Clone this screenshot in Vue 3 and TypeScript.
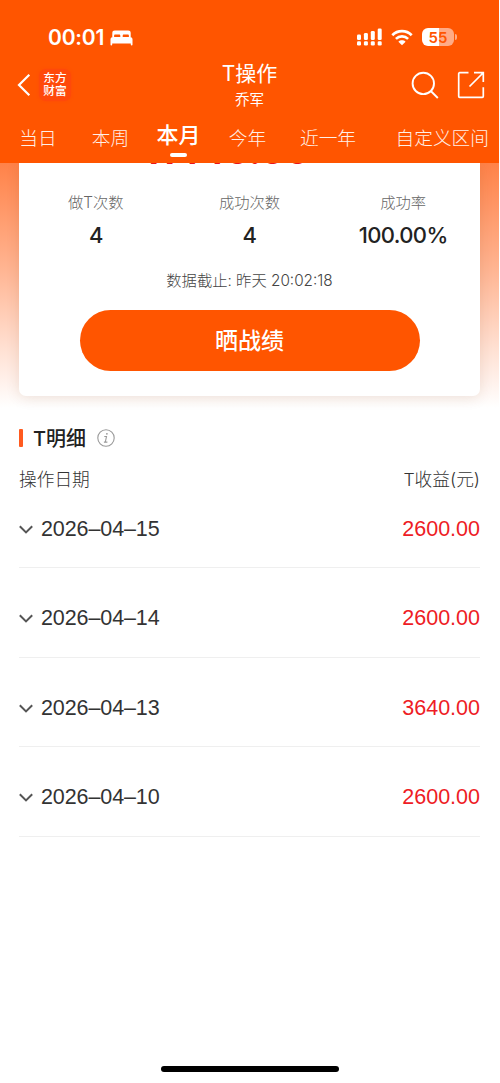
<script setup lang="ts">
interface Stat {
  label: string
  value: string
}
interface Row {
  date: string
  profit: string
}

const tabs: string[] = ['当日', '本周', '本月', '今年', '近一年', '自定义区间']
const activeTab = 2
const stats: Stat[] = [
  { label: '做T次数', value: '4' },
  { label: '成功次数', value: '4' },
  { label: '成功率', value: '100.00%' },
]
const rows: Row[] = [
  { date: '2026–04–15', profit: '2600.00' },
  { date: '2026–04–14', profit: '2600.00' },
  { date: '2026–04–13', profit: '3640.00' },
  { date: '2026–04–10', profit: '2600.00' },
]
const signalBars: number[] = [5.5, 7, 9, 11.5]
</script>

<template>
  <div class="page">
    <header class="header">
      <div class="status">
        <div class="clock">
          <span class="time">00:01</span>
          <svg class="bed" viewBox="0 0 23 16" width="23" height="16" fill="#fff">
            <path d="M2.300 7V3C2.300 1.300 3.200.5 4.800.5H18.200C19.800.5 20.700 1.300 20.700 3V7H18.900V5.700C18.900 4.900 18.500 4.500 17.700 4.500H13.900C13.100 4.500 12.700 4.900 12.700 5.700V7H10.300V5.700C10.300 4.900 9.900 4.500 9.100 4.500H5.300C4.500 4.500 4.100 4.900 4.100 5.700V7Z" />
            <path d="M3 6.900H20C21.600 6.900 22.500 7.800 22.500 9.400V14.800C22.500 15.300 22.200 15.600 21.700 15.600S20.800 15.300 20.800 14.800V13.500H2.200V14.800C2.200 15.300 1.800 15.600 1.300 15.600S.5 15.300.5 14.800V9.400C.5 7.800 1.400 6.900 3 6.900Z" />
          </svg>
        </div>
        <div class="indicators">
          <svg class="signal" viewBox="0 0 25 18" width="25" height="18" fill="#fff">
            <g v-for="(h, i) in signalBars" :key="i">
              <rect :x="i * 6.9" :y="12 - h" width="4" :height="h" rx="1.3" />
              <rect :x="i * 6.9" y="13.3" width="4" height="4.2" rx="1.3" />
            </g>
          </svg>
          <svg class="wifi" viewBox="0 0 22 17" width="22" height="17">
            <path d="M1.300 6.200C6.700.8 15.300.8 20.700 6.200" fill="none" stroke="#fff" stroke-width="2.7" />
            <path d="M4.900 9.900c3.500-3.400 8.700-3.400 12.200 0" fill="none" stroke="#fff" stroke-width="2.6" />
            <path d="M11 16.300 7.400 12.700c2-1.800 5.200-1.800 7.200 0z" fill="#fff" />
          </svg>
          <div class="battery">55</div>
          <i class="cap"></i>
        </div>
      </div>

      <div class="nav">
        <div class="nav-left">
          <svg viewBox="0 0 14 24" width="14" height="24" fill="none" stroke="#fff" stroke-width="2.2">
            <path d="M12.300 1.700 2 12l10.300 10.300" />
          </svg>
          <div class="logo"><span>东方</span><span>财富</span></div>
        </div>
        <div class="titles">
          <h1>T操作</h1>
          <p>乔军</p>
        </div>
        <div class="nav-right">
          <svg viewBox="0 0 28 28" width="28" height="28" fill="none" stroke="#fff" stroke-width="1.9">
            <circle cx="12.3" cy="12.4" r="10.7" />
            <path d="m19.800 20 7 7" />
          </svg>
          <svg viewBox="0 0 28 28" width="28" height="28" fill="none" stroke="#fff" stroke-width="1.7">
            <path d="M11.500 1.700H2.700a1 1 0 0 0-1 1v22.600a1 1 0 0 0 1 1h22.600a1 1 0 0 0 1-1v-9" />
            <path d="M17 1.700h9.300V11M26 2 12.500 15.500" />
          </svg>
        </div>
      </div>

      <nav class="tabs">
        <span v-for="(t, i) in tabs" :key="t" class="tab" :class="{ active: i === activeTab }">{{ t }}</span>
      </nav>
    </header>

    <section class="hero">
      <div class="card">
        <div class="total"><span>11440.00</span></div>
        <div class="stats">
          <div v-for="s in stats" :key="s.label" class="stat">
            <span class="label">{{ s.label }}</span>
            <span class="value">{{ s.value }}</span>
          </div>
        </div>
        <p class="deadline">数据截止: 昨天 20:02:18</p>
        <button class="share" type="button">晒战绩</button>
      </div>
    </section>

    <section class="detail">
      <div class="heading">
        <i class="mark"></i>
        <h2>T明细</h2>
        <svg viewBox="0 0 18 18" width="18" height="18" fill="none" stroke="#999">
          <circle cx="9" cy="9" r="8.2" stroke-width="1.1" />
          <path d="M7.300 7.500h2.200L8.300 13M6.900 13.100h3.500" stroke-width="1.1" />
          <circle cx="9.9" cy="4.8" r=".9" fill="#999" stroke="none" />
        </svg>
      </div>
      <div class="columns"><span>操作日期</span><span>T收益(元)</span></div>
      <div v-for="r in rows" :key="r.date" class="row">
        <svg viewBox="0 0 14 9" width="14" height="9" fill="none" stroke="#555" stroke-width="2">
          <path d="m.8 1.200 6.200 6.200 6.200-6.200" />
        </svg>
        <span class="date">{{ r.date }}</span>
        <span class="profit">{{ r.profit }}</span>
      </div>
    </section>

    <footer class="home"><i></i></footer>
  </div>
</template>

<style>
body {
  margin: 0;
  background: #fff;
}
</style>

<style scoped>
.page {
  display: flex;
  flex-direction: column;
  width: 499px;
  height: 1083px;
  overflow: hidden;
  background: #fff;
  color: #222;
  font-family: Inter, "Noto Sans CJK SC", sans-serif;
}
h1, h2, p {
  margin: 0;
  font-weight: 400;
}
svg {
  display: block;
  flex: none;
}
.header {
  flex: none;
  height: 163px;
  background: #ff5500;
  color: #fff;
}
.status {
  display: flex;
  justify-content: space-between;
  height: 62px;
  padding: 12px 42px 0 48px;
  box-sizing: border-box;
}
.clock, .indicators {
  display: flex;
  align-items: center;
  height: 50px;
}
.clock {
  gap: 6px;
}
.bed {
  margin-top: 1px;
}
.time {
  padding-top: 2px;
  font-size: 21px;
  font-weight: 600;
  line-height: 26px;
  letter-spacing: -0.2px;
}
.signal, .wifi {
  margin-right: 9px;
}
.battery {
  width: 32px;
  height: 18px;
  border-radius: 6px;
  background: linear-gradient(90deg, #fff 54%, #ffab86 54%);
  color: #ff5500;
  font-size: 15px;
  font-weight: 600;
  line-height: 19px;
  text-align: center;
}
.cap {
  width: 2px;
  height: 6px;
  margin-left: 1px;
  border-radius: 0 2px 2px 0;
  background: #ffab86;
}
.nav {
  display: grid;
  grid-template-columns: 1fr 120px 1fr;
  height: 51px;
}
.nav-left {
  display: flex;
  align-items: center;
  gap: 8px;
  height: 46px;
  padding-left: 17px;
}
.logo {
  display: flex;
  flex-direction: column;
  align-items: center;
  justify-content: center;
  width: 32px;
  height: 32px;
  border-radius: 7px;
  background: #ff490a;
  box-shadow: 0 0 3px #ff490a;
  font-size: 11.7px;
  font-weight: 500;
  line-height: 13px;
}
.titles {
  text-align: center;
}
.titles h1 {
  height: 26px;
  font-size: 21px;
  line-height: 24px;
}
.titles p {
  font-size: 14.5px;
  line-height: 23px;
}
.nav-right {
  display: flex;
  align-items: center;
  justify-content: flex-end;
  gap: 18px;
  height: 46px;
  padding-right: 14px;
}
.tabs {
  display: grid;
  grid-template-columns: 76px 69px 67px 71px 90px 116px;
  height: 50px;
}
.tab {
  font-size: 18.7px;
  font-weight: 300;
  line-height: 51px;
  text-align: center;
  white-space: nowrap;
  color: #fff0e8;
}
.tab:last-child {
  text-align: right;
}
.tab.active {
  display: flex;
  flex-direction: column;
  align-items: center;
  height: 44px;
  font-size: 22px;
  font-weight: 500;
  line-height: 44px;
  color: #fff;
}
.tab.active::after {
  flex: none;
  width: 17px;
  height: 4px;
  margin-top: -4px;
  border-radius: 2px;
  background: #fff;
  content: "";
}
.hero {
  flex: none;
  height: 253px;
  padding: 0 19px;
  overflow: hidden;
  background: linear-gradient(180deg, #ff8248 0, #ffb491 105px, #ffe0d2 185px, #fff 245px);
}
.card {
  display: flex;
  flex-direction: column;
  align-items: center;
  height: 233px;
  border-radius: 0 0 7px 7px;
  background: #fff;
  box-shadow: 0 2px 14px rgba(110, 50, 20, 0.12);
}
.total {
  display: flex;
  align-items: flex-end;
  justify-content: center;
  align-self: stretch;
  height: 3px;
  padding-right: 46px;
  overflow: hidden;
  color: #e8141c;
  font-size: 37px;
  font-weight: 700;
  line-height: 31px;
}
.stats {
  display: grid;
  grid-template-columns: repeat(3, 1fr);
  align-self: stretch;
  padding-top: 23px;
}
.stat {
  display: flex;
  flex-direction: column;
  align-items: center;
}
.label {
  height: 28px;
  font-size: 15.3px;
  font-weight: 300;
  line-height: 28px;
  color: #666;
}
.value {
  height: 38px;
  font-size: 22px;
  font-weight: 500;
  line-height: 36px;
  letter-spacing: -0.6px;
}
.deadline {
  padding-top: 12px;
  font-size: 15.3px;
  font-weight: 300;
  line-height: 28px;
  color: #444;
}
.share {
  width: 340px;
  height: 61px;
  margin-top: 15px;
  padding: 0;
  border: 0;
  border-radius: 31px;
  background: #ff5500;
  color: #fff;
  font: 500 23px/63px Inter, "Noto Sans CJK SC", sans-serif;
}
.detail {
  flex: 1;
  padding: 6px 19px 0;
}
.heading {
  display: flex;
  align-items: center;
  height: 32px;
}
.mark {
  width: 4px;
  height: 18px;
  margin-right: 10px;
  border-radius: 1px;
  background: #ff5a1f;
}
.heading h2 {
  margin-right: 11px;
  padding-top: 1px;
  font-size: 20px;
  font-weight: 500;
  line-height: 32px;
}
.columns {
  display: flex;
  justify-content: space-between;
  height: 25px;
  padding-top: 12px;
  font-size: 17.7px;
  font-weight: 300;
  line-height: 27px;
  color: #333;
}
.row {
  display: flex;
  align-items: center;
  height: 77px;
  border-bottom: 1px solid #efefef;
  box-sizing: border-box;
  font-family: "Liberation Sans", Arial, sans-serif;
  font-size: 21.5px;
}
.row + .row {
  margin-top: 12.6px;
}
.date {
  margin-left: 8px;
  letter-spacing: -0.1px;
  color: #333;
}
.profit {
  margin-left: auto;
  color: #ee1c25;
}
.home {
  display: flex;
  justify-content: center;
  height: 17px;
}
.home i {
  width: 178px;
  height: 6px;
  border-radius: 3px;
  background: #000;
}
</style>
